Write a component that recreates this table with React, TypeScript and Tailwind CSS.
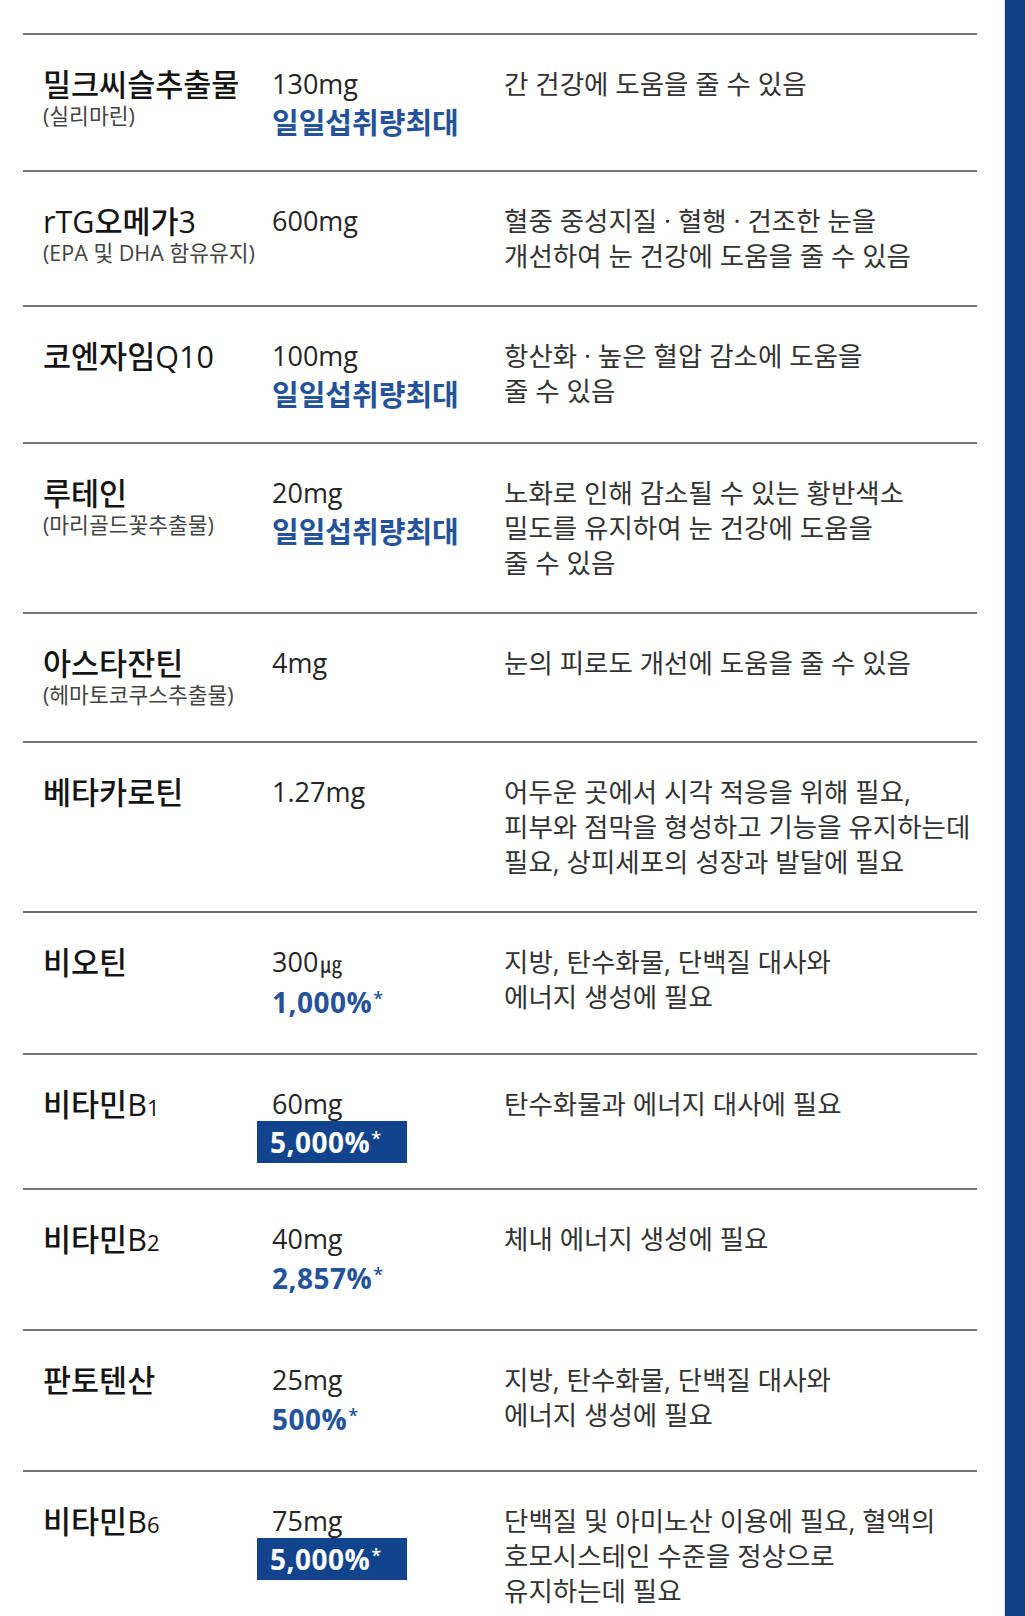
import React from 'react'

type Row = {
  name: string
  sub?: string
  amount: string
  extra?: string
  extraKind?: 'text' | 'pct' | 'badge'
  desc: string[]
}

const rows: Row[] = [
  { name: '밀크씨슬추출물', sub: '(실리마린)', amount: '130mg', extra: '일일섭취량최대', extraKind: 'text', desc: ['간 건강에 도움을 줄 수 있음'] },
  { name: 'rTG오메가3', sub: '(EPA 및 DHA 함유유지)', amount: '600mg', desc: ['혈중 중성지질 · 혈행 · 건조한 눈을', '개선하여 눈 건강에 도움을 줄 수 있음'] },
  { name: '코엔자임Q10', amount: '100mg', extra: '일일섭취량최대', extraKind: 'text', desc: ['항산화 · 높은 혈압 감소에 도움을', '줄 수 있음'] },
  { name: '루테인', sub: '(마리골드꽃추출물)', amount: '20mg', extra: '일일섭취량최대', extraKind: 'text', desc: ['노화로 인해 감소될 수 있는 황반색소', '밀도를 유지하여 눈 건강에 도움을', '줄 수 있음'] },
  { name: '아스타잔틴', sub: '(헤마토코쿠스추출물)', amount: '4mg', desc: ['눈의 피로도 개선에 도움을 줄 수 있음'] },
  { name: '베타카로틴', amount: '1.27mg', desc: ['어두운 곳에서 시각 적응을 위해 필요,', '피부와 점막을 형성하고 기능을 유지하는데', '필요, 상피세포의 성장과 발달에 필요'] },
  { name: '비오틴', amount: '300㎍', extra: '1,000%', extraKind: 'pct', desc: ['지방, 탄수화물, 단백질 대사와', '에너지 생성에 필요'] },
  { name: '비타민B1', amount: '60mg', extra: '5,000%', extraKind: 'badge', desc: ['탄수화물과 에너지 대사에 필요'] },
  { name: '비타민B2', amount: '40mg', extra: '2,857%', extraKind: 'pct', desc: ['체내 에너지 생성에 필요'] },
  { name: '판토텐산', amount: '25mg', extra: '500%', extraKind: 'pct', desc: ['지방, 탄수화물, 단백질 대사와', '에너지 생성에 필요'] },
  { name: '비타민B6', amount: '75mg', extra: '5,000%', extraKind: 'badge', desc: ['단백질 및 아미노산 이용에 필요, 혈액의', '호모시스테인 수준을 정상으로', '유지하는데 필요'] },
]

const font = { fontFamily: '"Open Sans", "Noto Sans CJK KR", sans-serif' }

function Name({ text }: { text: string }) {
  const m = text.match(/^(비타민B)(\d)$/)
  if (!m) return <>{text}</>
  return (
    <>
      {m[1]}
      <span className="text-[22px]">{m[2]}</span>
    </>
  )
}

function Amount({ row }: { row: Row }) {
  const micro = row.amount.endsWith('㎍')
  return (
    <div className="flex flex-col items-start">
      <div className="text-[27px] leading-[34px] text-[#262626]">
        {micro ? (
          <>
            {row.amount.slice(0, -1)}
            <span className="ml-[2px] text-[22px]">㎍</span>
          </>
        ) : (
          row.amount
        )}
      </div>
      {row.extraKind === 'text' && (
        <div className="mt-[6px] text-[29px] leading-[32px] font-bold text-[#24539b]">{row.extra}</div>
      )}
      {row.extraKind === 'pct' && (
        <div className="mt-[6px] text-[28px] leading-[32px] font-bold text-[#24539b] tracking-[0.5px]">
          {row.extra}
          <span className="relative -top-[8px] ml-[1px] text-[18px] font-semibold">*</span>
        </div>
      )}
      {row.extraKind === 'badge' && (
        <div className="-mb-[6px] -ml-[15px] h-[42px] w-[150px] bg-[#12448e] pl-[13px] text-[28px] leading-[42px] font-bold text-white tracking-[0.5px]">
          {row.extra}
          <span className="relative -top-[8px] ml-[1px] text-[18px] font-semibold">*</span>
        </div>
      )}
    </div>
  )
}

export default function App() {
  return (
    <div className="flex h-[1616px] w-[1025px] overflow-hidden bg-white" style={font}>
      <div className="ml-[23px] w-[954px] pt-[33px]">
        {rows.map((row, i) => (
          <div
            key={i}
            className="grid grid-cols-[229px_232px_1fr] border-t-2 border-[#737373] pl-[20px] pt-[32px] pb-[31px]"
          >
            <div>
              <div className="whitespace-nowrap text-[30.5px] leading-[34px] font-medium text-[#151515]">
                <Name text={row.name} />
              </div>
              {row.sub && (
                <div className="whitespace-nowrap text-[21.5px] leading-[30px] text-[#444]">{row.sub}</div>
              )}
            </div>
            <Amount row={row} />
            <div className="text-[26.5px] leading-[35px] text-[#333]">
              {row.desc.map((l, j) => (
                <div key={j} className="whitespace-nowrap">
                  {l}
                </div>
              ))}
            </div>
          </div>
        ))}
      </div>
      <div className="ml-auto flex h-full">
        <div className="w-[1px] bg-[#d3deea]" />
        <div className="h-full w-[20px] bg-[#113f84]" />
      </div>
    </div>
  )
}
